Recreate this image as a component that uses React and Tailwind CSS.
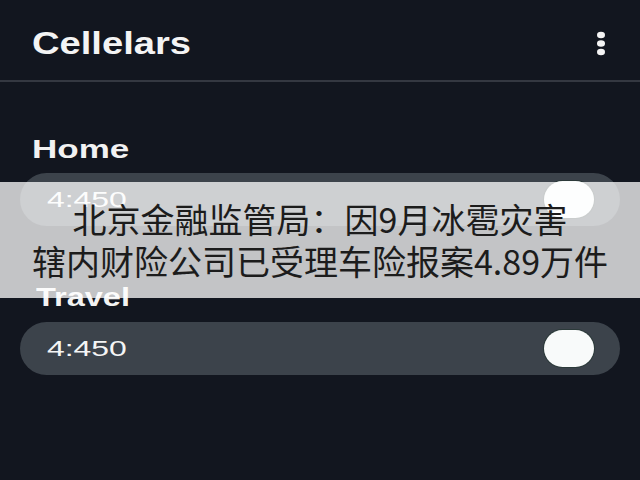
import React from "react";

function Kebab() {
  return (
    <svg width="12" height="28" viewBox="0 0 12 28" className="mt-[4px]">
      <ellipse cx="6" cy="5" rx="4" ry="3.3" fill="#f4f4f4" />
      <ellipse cx="6" cy="13.5" rx="4" ry="3.3" fill="#f4f4f4" />
      <ellipse cx="6" cy="22" rx="4" ry="3.3" fill="#f4f4f4" />
    </svg>
  );
}

function Pill({ h }) {
  return (
    <div className={`flex items-center justify-between rounded-full bg-[#3c434b] pl-[27px] pr-[26px] ${h}`}>
      <span className="inline-block origin-left scale-x-[1.45] text-[22px] leading-[26px] text-[#f4f5f5]">4:450</span>
      <div className="h-[37px] w-[50px] rounded-full bg-[#f8fafa] ring-1 ring-[#2c3a3a]" />
    </div>
  );
}

export default function App() {
  return (
    <div className="relative h-[480px] w-[640px] overflow-hidden bg-[#12161f] font-['Liberation_Sans',sans-serif]">
      <header className="flex h-[82px] items-start justify-between border-b-2 border-[#343841] pl-[32px] pr-[33px] pt-[26px]">
        <h1 className="inline-block origin-left scale-x-[1.23] text-[31px] font-bold leading-[36px] text-[#f4f4f4]">
          Cellelars
        </h1>
        <Kebab />
      </header>
      <main className="flex flex-col px-[20px]">
        <div className="mt-[52px] pl-[12px]">
          <span className="inline-block origin-left scale-x-[1.4] text-[25px] font-bold leading-[30px] text-[#f2f2f2]">Home</span>
        </div>
        <div className="mt-[8px]">
          <Pill h="h-[53px]" />
        </div>
        <div className="mt-[56px] pl-[16px]">
          <span className="inline-block origin-left scale-x-[1.25] text-[26px] font-bold leading-[30px] text-[#f2f2f2]">Travel</span>
        </div>
        <div className="mt-[9px]">
          <Pill h="h-[53px]" />
        </div>
      </main>
      <div className="absolute left-0 right-0 top-[182px] flex h-[116px] flex-col items-center justify-center bg-white/75 font-['Noto_Sans_CJK_SC',sans-serif] text-[34px] leading-[42px] text-[#1c1c1c]">
        <div>北京金融监管局：因9月冰雹灾害</div>
        <div>辖内财险公司已受理车险报案4.89万件</div>
      </div>
    </div>
  );
}
